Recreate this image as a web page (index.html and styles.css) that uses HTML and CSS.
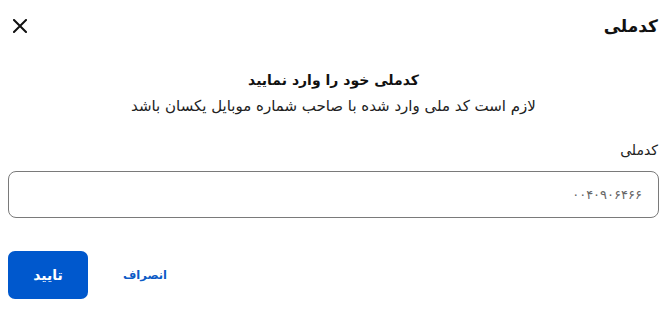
FILE: index.html
```html
<!DOCTYPE html>
<html lang="fa" dir="rtl">
<head>
<meta charset="utf-8">
<title>کدملی</title>
<link rel="stylesheet" href="styles.css">
</head>
<body>
<div class="dialog">
  <header class="dialog-header">
    <h1 class="dialog-title">کدملی</h1>
    <button class="close-btn" aria-label="بستن">
      <svg width="14" height="14" viewBox="0 0 14 14"><path d="M1 1L13 13M13 1L1 13" stroke="#111" stroke-width="2" stroke-linecap="square"/></svg>
    </button>
  </header>
  <section class="intro">
    <h2 class="intro-title">کدملی خود را وارد نمایید</h2>
    <p class="intro-text">لازم است کد ملی وارد شده با صاحب شماره موبایل یکسان باشد</p>
  </section>
  <div class="field">
    <label class="field-label" for="nid">کدملی</label>
    <div class="field-box"><input id="nid" class="field-input" value="۰۰۴۰۹۰۶۴۶۶"></div>
  </div>
  <div class="actions">
    <button class="btn-primary">تایید</button>
    <button class="btn-link">انصراف</button>
  </div>
</div>
</body>
</html>
```

FILE: styles.css
```css
* { box-sizing: border-box; }
html, body { margin: 0; background: #fff; }
body {
  font-family: "DejaVu Sans", "Noto Sans", sans-serif;
  color: #1a1a1a;
  width: 667px;
}
.dialog { padding: 0 8px; }
.dialog-header {
  display: flex;
  align-items: center;
  justify-content: space-between;
  height: 52px;
  padding: 0 1px 0 5px;
}
.dialog-title {
  margin: 0;
  font-size: 17px;
  font-weight: bold;
  color: #111;
}
.close-btn {
  border: 0;
  background: none;
  padding: 0;
  width: 14px;
  height: 14px;
  display: flex;
  cursor: pointer;
}
.intro { text-align: center; margin-top: 16px; }
.intro-title {
  margin: 0;
  font-size: 14px;
  font-weight: bold;
  color: #111;
  line-height: 24px;
}
.intro-text {
  margin: 3px 0 0;
  font-size: 15px;
  color: #222;
  line-height: 22px;
}
.field { margin-top: 24px; }
.field-label {
  display: block;
  font-size: 14px;
  color: #222;
  line-height: 18px;
  padding-right: 1px;
}
.field-box {
  margin-top: 12px;
  height: 47px;
  border: 1px solid #7a7a7a;
  border-radius: 8px;
  display: flex;
  align-items: center;
  padding: 0 14px;
}
.field-input {
  border: 0;
  outline: none;
  width: 100%;
  font: inherit;
  font-size: 13px;
  color: #666;
  background: transparent;
  direction: rtl;
  text-align: right;
  letter-spacing: 1.4px;
}
.actions {
  display: flex;
  direction: ltr;
  align-items: center;
  margin-top: 33px;
  gap: 35px;
}
.btn-primary {
  width: 80px;
  height: 48px;
  border: 0;
  border-radius: 7px;
  background: #0058cd;
  color: #fff;
  font-family: inherit;
  font-size: 14px;
  font-weight: bold;
}
.btn-link {
  border: 0;
  background: none;
  padding: 0;
  color: #0d5bc6;
  font-family: inherit;
  font-size: 11.5px;
  font-weight: bold;
}
```
